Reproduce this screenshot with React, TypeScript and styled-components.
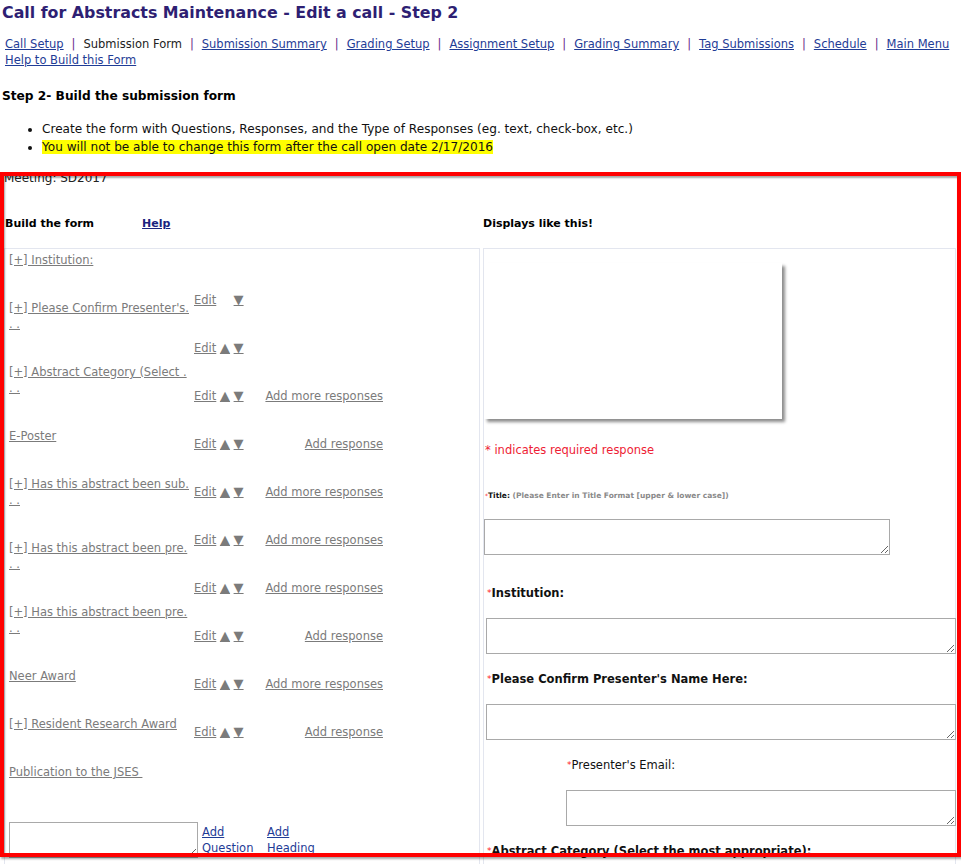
import React from "react";
import styled, { createGlobalStyle } from "styled-components";

const GlobalStyle = createGlobalStyle`
  html, body { margin: 0; padding: 0; background: #fff; }
  body {
    font-family: "DejaVu Sans", Verdana, sans-serif;
    font-size: 11.5px;
    color: #000;
  }
`;

const Page = styled.div`
  position: relative;
  padding: 0 0 40px 2px;
`;

const Title = styled.h1`
  margin: 2px 0 0;
  font-size: 15.85px;
  line-height: 22px;
  font-weight: bold;
  color: #2e1f73;
`;

const Nav = styled.div`
  margin-top: 12px;
  padding-left: 3px;
  line-height: 16px;
`;

const NavRow = styled.div`
  display: flex;
  align-items: baseline;
  white-space: nowrap;
`;

const NavLink = styled.a`
  color: #1f3c96;
  text-decoration: underline;
  cursor: pointer;
`;

const Current = styled.span`
  color: #222;
`;

const Sep = styled.span`
  color: #6a2a8a;
  margin: 0 8px;
`;

const StepTitle = styled.h2`
  margin: 20px 0 0;
  font-size: 12.2px;
  line-height: 16px;
  font-weight: bold;
`;

const Bullets = styled.ul`
  margin: 16px 0 0;
  padding-left: 40px;
  font-size: 12.1px;
  line-height: 18px;
  color: #111;
`;

const Highlight = styled.span`
  background: #ffff00;
`;

const Meeting = styled.div`
  margin-top: 14px;
  padding-left: 2px;
  font-size: 12px;
  line-height: 16px;
  color: #222;
`;

const FormArea = styled.div`
  display: grid;
  grid-template-columns: 476px 473px;
  column-gap: 3px;
  margin-top: 30px;
  padding-left: 2px;
`;

const ColHead = styled.div<{ $indent?: number }>`
  display: flex;
  align-items: baseline;
  height: 16px;
  line-height: 16px;
  padding-left: ${(p) => p.$indent ?? 0}px;
  margin-bottom: 16px;
  font-size: 11px;
  font-weight: bold;
`;

const HelpLink = styled.a`
  margin-left: 48px;
  color: #1a237e;
  text-decoration: underline;
  font-weight: bold;
`;

const Box = styled.div`
  border: 1px solid #e3e6ef;
  min-height: 620px;
`;

const BuildColumns = styled.div`
  display: flex;
  align-items: flex-start;
`;

const LabelCol = styled.div`
  width: 185px;
  padding: 3px 0 0 4px;
  line-height: 16px;
`;

const GrayLink = styled.a`
  color: #7b7b7b;
  text-decoration: underline;
  cursor: pointer;
`;

const QLabel = styled.div`
  margin-bottom: 32px;
  white-space: nowrap;
`;

const ActionCol = styled.div`
  width: 189px;
  padding-top: 43px;
`;

const ActionRow = styled.div`
  display: flex;
  justify-content: space-between;
  height: 48px;
  line-height: 16px;
  white-space: nowrap;
`;

const Arrow = styled(GrayLink)<{ $hidden?: boolean }>`
  font-size: 13px;
  visibility: ${(p) => (p.$hidden ? "hidden" : "visible")};
`;

const AddRow = styled.div`
  display: flex;
  align-items: flex-start;
  margin-top: 10px;
  padding-left: 4px;
`;

const TextBox = styled.textarea<{ $w: number; $ml?: number }>`
  box-sizing: border-box;
  display: block;
  width: ${(p) => p.$w}px;
  height: 36px;
  margin: 0 0 0 ${(p) => p.$ml ?? 0}px;
  border: 1px solid #a9a9a9;
  background: #fff;
  font-family: "DejaVu Sans", sans-serif;
`;

const AddCell = styled.div<{ $w: number; $ml?: number }>`
  width: ${(p) => p.$w}px;
  margin: 2px 0 0 ${(p) => p.$ml ?? 0}px;
  line-height: 16px;
`;

const BlueLink = styled.a`
  color: #1f3c96;
  text-decoration: underline;
`;

const PreviewCard = styled.div`
  width: 298px;
  height: 156px;
  margin-top: 14px;
  background: #fff;
  box-shadow: 3px 3px 3px rgba(0, 0, 0, 0.45);
`;

const RequiredNote = styled.div`
  margin-top: 23px;
  padding-left: 1px;
  line-height: 16px;
  color: #ee1c34;
`;

const TinyLabel = styled.div`
  margin-top: 32px;
  padding-left: 1px;
  line-height: 12px;
  font-size: 7.5px;
  font-weight: bold;
  color: #111;
`;

const TinyHint = styled.span`
  color: #8a8a8a;
`;

const Req = styled.span`
  color: #ff1a1a;
  font-size: 0.8em;
  vertical-align: top;
  font-weight: normal;
`;

const FieldLabel = styled.div<{ $bold?: boolean; $indent: number; $gap: number }>`
  margin-top: ${(p) => p.$gap}px;
  padding-left: ${(p) => p.$indent}px;
  line-height: 16px;
  font-weight: ${(p) => (p.$bold ? "bold" : "normal")};
  color: #111;
  white-space: nowrap;
`;

const FieldBox = styled.div`
  margin-top: 17px;
`;

const Frame = styled.div`
  position: absolute;
  top: 170px;
  left: 0;
  width: 961px;
  height: 685px;
  box-sizing: border-box;
  border: 4px solid #ff0000;
  box-shadow: 1px 2px 2px rgba(0, 0, 0, 0.35), inset 1px 2px 2px rgba(0, 0, 0, 0.35);
  pointer-events: none;
`;

const navItems: { label: string; current?: boolean }[] = [
  { label: "Call Setup" },
  { label: "Submission Form", current: true },
  { label: "Submission Summary" },
  { label: "Grading Setup" },
  { label: "Assignment Setup" },
  { label: "Grading Summary" },
  { label: "Tag Submissions" },
  { label: "Schedule" },
  { label: "Main Menu" },
];

const questions: string[][] = [
  ["[+] Institution:"],
  ["[+] Please Confirm Presenter's.", ". ."],
  ["[+] Abstract Category (Select .", ". ."],
  ["E-Poster"],
  ["[+] Has this abstract been sub.", ". ."],
  ["[+] Has this abstract been pre.", ". ."],
  ["[+] Has this abstract been pre.", ". ."],
  ["Neer Award"],
  ["[+] Resident Research Award"],
  ["Publication to the JSES\u00a0"],
];

type Action = { up: boolean; add?: string };
const actions: Action[] = [
  { up: false },
  { up: true },
  { up: true, add: "Add more responses" },
  { up: true, add: "Add response" },
  { up: true, add: "Add more responses" },
  { up: true, add: "Add more responses" },
  { up: true, add: "Add more responses" },
  { up: true, add: "Add response" },
  { up: true, add: "Add more responses" },
  { up: true, add: "Add response" },
];

export default function App() {
  return (
    <Page>
      <GlobalStyle />
      <Title>Call for Abstracts Maintenance - Edit a call - Step 2</Title>
      <Nav>
        <NavRow>
          {navItems.map((n, i) => (
            <React.Fragment key={n.label}>
              {i > 0 && <Sep>|</Sep>}
              {n.current ? <Current>{n.label}</Current> : <NavLink>{n.label}</NavLink>}
            </React.Fragment>
          ))}
        </NavRow>
        <NavRow>
          <NavLink>Help to Build this Form</NavLink>
        </NavRow>
      </Nav>
      <StepTitle>Step 2- Build the submission form</StepTitle>
      <Bullets>
        <li>Create the form with Questions, Responses, and the Type of Responses (eg. text, check-box, etc.)</li>
        <li>
          <Highlight>You will not be able to change this form after the call open date 2/17/2016</Highlight>
        </li>
      </Bullets>
      <Meeting>Meeting: SD2017</Meeting>
      <FormArea>
        <div>
          <ColHead $indent={1}>
            Build the form
            <HelpLink>Help</HelpLink>
          </ColHead>
          <Box>
            <BuildColumns>
              <LabelCol>
                {questions.map((q, i) => (
                  <QLabel key={i}>
                    {q.map((line, j) => (
                      <div key={j}>
                        <GrayLink>{line}</GrayLink>
                      </div>
                    ))}
                  </QLabel>
                ))}
              </LabelCol>
              <ActionCol>
                {actions.map((a, i) => (
                  <ActionRow key={i}>
                    <span>
                      <GrayLink>Edit</GrayLink> <Arrow $hidden={!a.up}>▲</Arrow> <Arrow>▼</Arrow>
                    </span>
                    {a.add && <GrayLink>{a.add}</GrayLink>}
                  </ActionRow>
                ))}
              </ActionCol>
            </BuildColumns>
            <AddRow>
              <TextBox $w={189} />
              <AddCell $w={65} $ml={4}>
                <BlueLink>Add Question</BlueLink>
              </AddCell>
              <AddCell $w={60}>
                <BlueLink>Add Heading</BlueLink>
              </AddCell>
            </AddRow>
          </Box>
        </div>
        <div>
          <ColHead $indent={0}>Displays like this!</ColHead>
          <Box>
            <PreviewCard />
            <RequiredNote>* indicates required response</RequiredNote>
            <TinyLabel>
              <Req>*</Req>Title: <TinyHint>(Please Enter in Title Format [upper &amp; lower case])</TinyHint>
            </TinyLabel>
            <FieldBox>
              <TextBox $w={406} />
            </FieldBox>
            <FieldLabel $bold $indent={3} $gap={30}>
              <Req>*</Req>Institution:
            </FieldLabel>
            <FieldBox>
              <TextBox $w={470} $ml={2} />
            </FieldBox>
            <FieldLabel $bold $indent={3} $gap={17}>
              <Req>*</Req>Please Confirm Presenter's Name Here:
            </FieldLabel>
            <FieldBox>
              <TextBox $w={470} $ml={2} />
            </FieldBox>
            <FieldLabel $indent={83} $gap={17}>
              <Req>*</Req>Presenter's Email:
            </FieldLabel>
            <FieldBox>
              <TextBox $w={390} $ml={82} />
            </FieldBox>
            <FieldLabel $bold $indent={3} $gap={17}>
              <Req>*</Req>Abstract Category (Select the most appropriate):
            </FieldLabel>
          </Box>
        </div>
      </FormArea>
      <Frame />
    </Page>
  );
}
